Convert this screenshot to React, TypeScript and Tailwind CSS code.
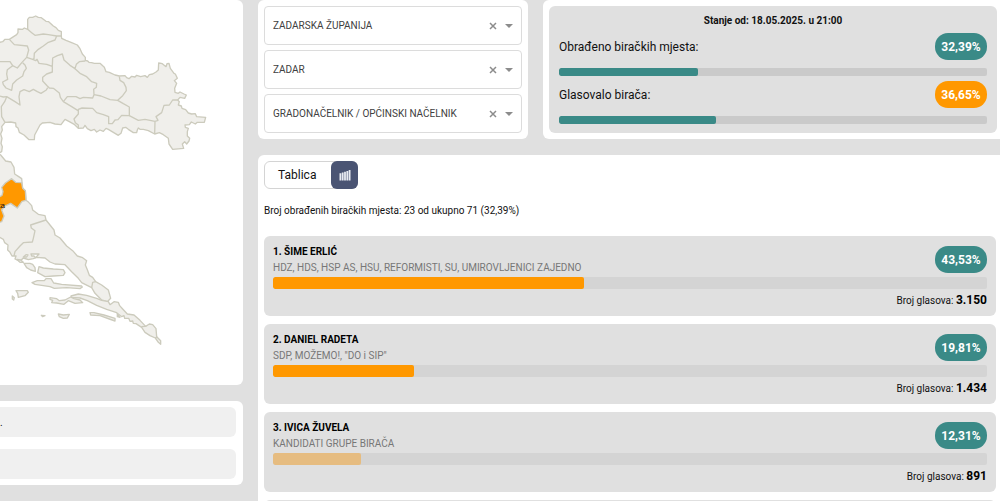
import React, { useState } from 'react';

const COUNTIES = ['ZADARSKA ŽUPANIJA', 'SPLITSKO-DALMATINSKA ŽUPANIJA'];
const TOWNS = ['ZADAR', 'BENKOVAC'];
const ELECTIONS = ['GRADONAČELNIK / OPĆINSKI NAČELNIK', 'ŽUPAN'];

const CANDIDATES = [
  {
    name: '1. ŠIME ERLIĆ',
    parties: 'HDZ, HDS, HSP AS, HSU, REFORMISTI, SU, UMIROVLJENICI ZAJEDNO',
    percent: 43.53,
    votes: '3.150',
    leading: true,
  },
  { name: '2. DANIEL RADETA', parties: 'SDP, MOŽEMO!, "DO i SIP"', percent: 19.81, votes: '1.434', leading: true },
  { name: '3. IVICA ŽUVELA', parties: 'KANDIDATI GRUPE BIRAČA', percent: 12.31, votes: '891', leading: false },
  { name: '4. ENIO MEŠTROVIĆ', parties: 'MOST', percent: 9.07, votes: '656', leading: false },
];

const formatPercent = (value: number) => `${value.toFixed(2).replace('.', ',')}%`;

function CountyMap() {
  return (
    <svg
      viewBox="0 0 729 1155"
      className="block w-full"
      fill="#f0efeb"
      stroke="#cccbbd"
      strokeWidth="4"
      strokeLinejoin="round"
      role="img"
      aria-label="Karta županija"
    >
      {/* kontinentalni dio */}
      <path d="M-5 128L8 125L15 118L28 118L36 113L50 104L54 98L54 87L68 88L73 84L83 88L83 58L88 52L98 52L107 48L115 52L124 53L133 60L138 64L146 65L160 78L168 83L175 91L184 95L184 108L185 115L198 121L215 128L232 135L240 146L247 162L256 172L256 181L263 183L267 187L275 188L283 190L300 190L313 202L318 215L328 217L345 225L358 228L375 227L380 233L387 236L395 229L405 231L410 226L422 230L435 227L442 232L448 224L458 222L468 216L475 210L476 189L487 191L498 200L501 191L507 190L511 205L522 220L526 222L532 235L523 242L530 250L524 265L525 277L535 280L540 276L552 282L559 285L554 295L540 292L533 300L538 305L535 315L544 318L546 325L557 329L565 339L575 342L586 341L590 350L617 352L613 367L592 367L586 372L574 366L568 374L555 375L556 382L565 385L562 395L562 408L569 415L567 423L560 432L554 425L547 432L551 445L518 448L507 432L505 415L490 404L478 398L464 402L445 392L430 388L420 388L415 384L412 390L410 398L400 398L385 388L377 382L368 384L363 400L355 406L340 397L325 388L318 385L310 394L300 390L290 396L283 388L273 392L262 386L255 376L250 384L235 385L224 374L208 365L195 358L183 374L165 372L150 367L127 369L120 375L112 390L104 405L103 419L87 419L72 405L58 397L54 384L48 380L47 369L32 366L15 367L5 380L7 390L2 402L6 415L3 430L7 440L5 455L-5 460Z" />
      <g fill="none">
        <path d="M83 88L95 98L105 106L130 102L145 104L170 108L184 108" />
        <path d="M28 118L43 134L82 138L86 150L80 172L98 178L102 176L103 160L115 148L130 138L145 127L165 120L170 108" />
        <path d="M-5 185L30 185L38 197L52 204L66 187L80 172" />
        <path d="M38 197L22 209L20 222L23 238L8 246L10 254L18 264L35 271L38 252L50 240L68 228L72 215L79 205L75 195L68 188" />
        <path d="M98 178L107 182L111 178L117 190L140 193L157 199L158 174L172 167L187 162L192 180L210 196L225 206L229 193L238 185L256 183" />
        <path d="M157 199L157 216L140 222L128 232L128 243L142 258L148 264L160 265L178 279L181 292L190 305L215 320L234 332" />
        <path d="M225 206L240 220L260 230L275 245L290 250L289 262L281 268L282 284L278 294L250 292L240 296L228 290L202 290L190 305" />
        <path d="M282 284L303 288L330 299L353 301L368 287L379 272L378 262L371 248L360 241L358 230" />
        <path d="M353 301L370 311L388 321L388 347L365 346L354 359L345 360L337 371L326 371L326 350L310 344L290 338L278 325L246 324L235 328L235 342L222 357L226 368L235 375L235 385" />
        <path d="M388 347L415 361L435 358L465 364L464 402M465 364L474 361L468 350L485 338L492 316L508 315L518 300L533 300" />
        <path d="M143 263L139 270L123 280L112 275L100 268L88 275L72 269L60 275L57 290L60 315L45 305L20 290L10 291L-5 287" />
        <path d="M20 290L14 305L4 320L5 350L15 367" />
      </g>

      {/* obala */}
      <path d="M-5 460L2 465L17 483L33 486L42 502L44 522L55 529L65 536L68 565L76 572L78 601L86 607L95 617L98 630L115 643L135 647L138 660L162 690L165 705L180 714L200 738L218 752L232 768L248 773L260 782L256 795L262 809L268 826L278 832L287 845L305 855L325 870L332 895L322 905L305 900L285 880L275 863L245 848L235 835L215 815L195 794L165 792L150 786L135 774L110 772L100 776L85 779L70 774L60 784L45 777L48 768L36 768L30 757L23 750L24 735L14 728L10 718L-5 710Z" />
      <path d="M138 660L110 669L92 675L94 684L105 692L100 715L97 726L70 728L60 738L45 755L42 768" fill="none" />
      <path
        d="M35 536L47 547L65 548L68 565L76 572L78 601L66 604L52 624L32 610L15 618L5 630L12 648L5 665L-5 668L-5 592L6 586L9 575L5 562L16 549Z"
        fill="#ff9800"
      />

      {/* otoci */}
      <path d="M93 762L117 762L107 773L102 768L95 768Z" fill="#fff" />
      <path d="M70 771L78 764L84 765L80 771Z" fill="#fff" />
      <path d="M50 778L62 780L70 787L60 787Z" />
      <path d="M72 790L90 790L98 793L105 803L106 814L92 810L80 803Z" />
      <path d="M117 800L130 804L160 807L190 809L195 818L190 826L160 828L135 830L113 818Z" />
      <path d="M96 848L112 842L133 842L138 836L153 836L161 849L185 853L245 858L247 861L240 866L200 863L163 865L150 860L130 857L105 853Z" />
      <path d="M48 872L82 872L85 877L75 887L55 892L53 880Z" />
      <path d="M37 888L43 893L41 900L37 897Z" />
      <path d="M150 893L170 896L178 902L195 900L212 891L222 896L240 900L248 908L225 910L205 902L192 913L170 909L155 908L158 901L150 898Z" />
      <path d="M213 888L235 882L260 886L290 895L305 901L325 905L330 914L342 905L355 907L359 917L368 927L382 942L402 945L420 961L437 979L448 972L458 974L468 986L470 1010L482 1022L482 1033L475 1027L466 1014L450 1007L435 997L425 982L408 971L400 970L398 963L390 964L386 955L374 955L372 947L365 950L350 938L320 928L290 916L262 902L240 894L215 892Z" />
      <path d="M424 980L437 979M466 1014L472 1010M275 863L278 847L287 845M353 944L360 952L352 950L352 939" fill="none" />
      <path d="M270 938L282 938L312 945L345 955L345 963L328 957L300 947L272 945Z" />
      <path d="M175 942L190 945L208 943L202 954L190 955L178 950Z" />
      <path d="M124 946L135 947L128 950Z" />

      <text x="15" y="625" textAnchor="end" fontSize="24" fill="#111" stroke="none" fontFamily="Liberation Sans, sans-serif">
        Zadarska
      </text>
    </svg>
  );
}

function SelectBox({ label, options }: { label: string; options: string[] }) {
  const [value, setValue] = useState(options[0]);

  return (
    <div className="flex h-[39px] items-center rounded border border-[#dcdcdc] bg-white pr-2">
      <select
        aria-label={label}
        value={value}
        onChange={(e) => setValue(e.target.value)}
        className="h-full min-w-0 flex-1 appearance-none bg-transparent pl-2 text-[10px] text-[#404040] outline-none"
      >
        <option value="" />
        {options.map((option) => (
          <option key={option}>{option}</option>
        ))}
      </select>
      <button type="button" aria-label="Očisti" onClick={() => setValue('')} className="flex size-4 items-center justify-center">
        <svg viewBox="0 0 8 8" className="size-2" stroke="#8c8c8c" strokeWidth="1.5">
          <path d="M1 1L7 7M7 1L1 7" />
        </svg>
      </button>
      <svg viewBox="0 0 8 4" className="ml-1 h-1 w-2" fill="#8c8c8c" aria-hidden="true">
        <path d="M0 0H8L4 4Z" />
      </svg>
    </div>
  );
}

function Badge({ value, color }: { value: number; color: string }) {
  return (
    <span className={`flex h-[27px] w-[52px] shrink-0 items-center justify-center rounded-[13px] text-[12px] font-bold text-white ${color}`}>
      {formatPercent(value)}
    </span>
  );
}

function TurnoutRow({ label, value, color }: { label: string; value: number; color: string }) {
  return (
    <div>
      <div className="flex items-center justify-between">
        <span className="text-[12px] text-[#111]">{label}</span>
        <Badge value={value} color={color} />
      </div>
      <div className="mt-2 h-2 overflow-hidden rounded-xs bg-[#cacaca]">
        <div className="h-full rounded-xs bg-[#3a8a87]" style={{ width: `${value}%` }} />
      </div>
    </div>
  );
}

export default function App() {
  const [view, setView] = useState<'table' | 'chart'>('chart');

  return (
    <div className="grid h-screen grid-cols-[243fr_742fr] gap-[15px] overflow-hidden bg-[#e0e0e0] font-['Roboto',sans-serif] text-[#111]">
      {/* karta i poveznice */}
      <div className="flex flex-col gap-4">
        <div className="overflow-hidden rounded-r-md bg-white">
          <CountyMap />
        </div>
        <div className="flex flex-col gap-3 rounded-r-md bg-white py-[6px] pr-[7px]">
          <div className="flex h-[30px] items-center overflow-hidden rounded-r-md bg-[#f0f0f0] text-[10px]">.</div>
          <div className="h-[30px] rounded-r-md bg-[#f0f0f0]" />
        </div>
      </div>

      <div className="flex min-w-0 flex-col gap-4">
        <div className="grid grid-cols-[270fr_457fr] gap-[15px]">
          {/* filteri */}
          <div className="flex flex-col gap-[5px] rounded-md bg-white p-[6px]">
            <SelectBox label="Županija" options={COUNTIES} />
            <SelectBox label="Grad ili općina" options={TOWNS} />
            <SelectBox label="Vrsta izbora" options={ELECTIONS} />
          </div>

          {/* odaziv */}
          <div className="rounded-l-md bg-white py-[6px] pr-[3px] pl-[6px]">
            <div className="flex h-full flex-col rounded-md bg-[#e0e0e0] px-[10px] pt-[7px]">
              <p className="mb-1 text-center text-[10px] leading-4 font-bold">Stanje od: 18.05.2025. u 21:00</p>
              <div className="flex flex-col gap-[5px]">
                <TurnoutRow label="Obrađeno biračkih mjesta:" value={32.39} color="bg-[#3a8a87]" />
                <TurnoutRow label="Glasovalo birača:" value={36.65} color="bg-[#ff9800]" />
              </div>
            </div>
          </div>
        </div>

        {/* rezultati */}
        <div className="flex-1 rounded-l-md bg-white py-[6px] pr-1 pl-[6px]">
          <div className="flex h-[28px] w-fit rounded-md border border-[#d4d4d4]">
            <button
              type="button"
              onClick={() => setView('table')}
              aria-pressed={view === 'table'}
              className="w-[67px] pl-[13px] text-left text-[12px]"
            >
              Tablica
            </button>
            <button
              type="button"
              aria-label="Grafikon"
              aria-pressed={view === 'chart'}
              onClick={() => setView('chart')}
              className="-m-px flex w-[27px] items-center justify-center rounded-md bg-[#4a5473]"
            >
              <svg viewBox="0 0 12 12" className="size-3" fill="#e9ebf2">
                <path d="M0.5 4.2H2.3V11.5H0.5ZM2.8 3.5H4.6V11.5H2.8ZM5.1 2.7H6.9V11.5H5.1ZM7.4 1.9H9.2V11.5H7.4ZM9.7 1H11.5V11.5H9.7Z" />
              </svg>
            </button>
          </div>

          <p className="mt-[14px] mb-[17px] text-[10px] leading-4">Broj obrađenih biračkih mjesta: 23 od ukupno 71 (32,39%)</p>

          <div className="flex flex-col gap-2">
            {CANDIDATES.map((candidate) => (
              <div key={candidate.name} className="rounded-md bg-[#e0e0e0] px-[9px] pt-[7px] pb-[6px]">
                <div className="flex h-[33px] items-center justify-between">
                  <div>
                    <h2 className="text-[10px] leading-4 font-bold text-black">{candidate.name}</h2>
                    <p className="text-[10px] leading-4 text-[#777]">{candidate.parties}</p>
                  </div>
                  <Badge value={candidate.percent} color="bg-[#3a8a87]" />
                </div>
                <div className="mt-px h-3 overflow-hidden rounded-xs bg-[#d4d4d4]">
                  <div
                    className={`h-full rounded-xs ${candidate.leading ? 'bg-[#ff9800]' : 'bg-[#e6bc80]'}`}
                    style={{ width: `${candidate.percent}%` }}
                  />
                </div>
                <p className="mt-px h-5 text-right text-[10px] leading-5">
                  Broj glasova: <strong className="text-[12px] text-black">{candidate.votes}</strong>
                </p>
              </div>
            ))}
          </div>
        </div>
      </div>
    </div>
  );
}
